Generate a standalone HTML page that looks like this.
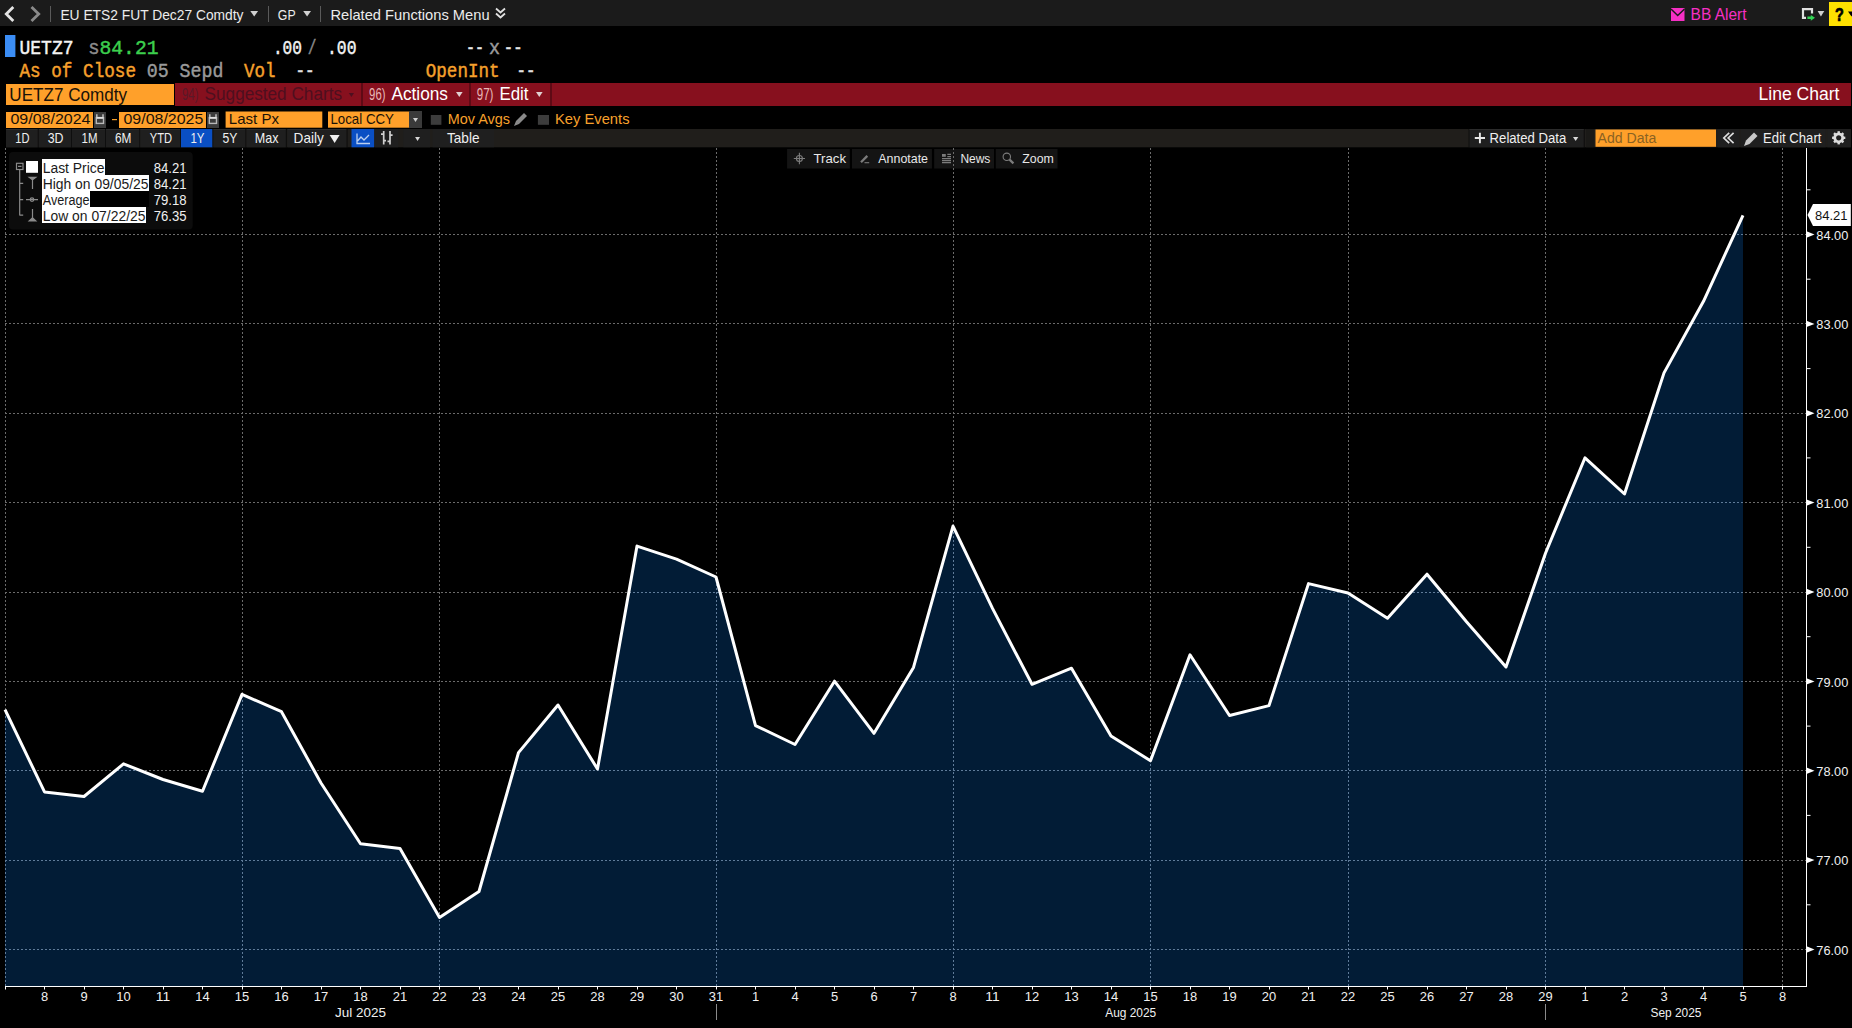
<!DOCTYPE html>
<html><head><meta charset="utf-8"><title>UETZ7 Comdty Line Chart</title>
<style>html,body{margin:0;padding:0;background:#000;width:1852px;height:1028px;overflow:hidden}svg{display:block}</style>
</head><body>
<svg width="1852" height="1028" viewBox="0 0 1852 1028">
<rect x="0" y="0" width="1852" height="1028" fill="#000"/>
<rect x="0" y="0" width="1852" height="26" fill="#1b1b1b" />
<path d="M13.3,7 L6.3,14 L13.3,21" fill="none" stroke="#e4e4e4" stroke-width="2.8"/>
<path d="M31.5,7 L38.7,14 L31.5,21" fill="none" stroke="#8a8a8a" stroke-width="2.8"/>
<rect x="50" y="6" width="1" height="16" fill="#5a5a5a" />
<text x="60.4" y="19.7" font-family='"Liberation Sans", sans-serif' font-size="15.41" fill="#ececec" textLength="183.1" lengthAdjust="spacingAndGlyphs" >EU ETS2 FUT Dec27 Comdty</text>
<path d="M250.3,10.9 L258.1,10.9 L254.20000000000002,16.6 Z" fill="#d0d0d0"/>
<rect x="268" y="6" width="1" height="16" fill="#5a5a5a" />
<text x="277.8" y="19.7" font-family='"Liberation Sans", sans-serif' font-size="15.41" fill="#ececec" textLength="17.8" lengthAdjust="spacingAndGlyphs" >GP</text>
<path d="M303.2,10.9 L311,10.9 L307.1,16.6 Z" fill="#d0d0d0"/>
<rect x="320" y="6" width="1" height="16" fill="#5a5a5a" />
<text x="330.4" y="19.7" font-family='"Liberation Sans", sans-serif' font-size="15.41" fill="#ececec" textLength="159.2" lengthAdjust="spacingAndGlyphs" >Related Functions Menu</text>
<path d="M496,8.5 L500.5,12.5 L505,8.5 M496,13.5 L500.5,17.5 L505,13.5" fill="none" stroke="#e0e0e0" stroke-width="1.8"/>
<rect x="1671" y="8" width="13.5" height="13" fill="#f62fc4" />
<path d="M1671,9 L1677.7,15.5 L1684.5,9" fill="none" stroke="#1b1b1b" stroke-width="1.5"/>
<text x="1690.6" y="19.7" font-family='"Liberation Sans", sans-serif' font-size="15.84" fill="#f62fc4" textLength="55.9" lengthAdjust="spacingAndGlyphs" >BB Alert</text>
<path d="M1806,17.8 L1803,17.8 L1803,9.2 L1812,9.2 L1812,13.6" fill="none" stroke="#e0e0e0" stroke-width="2.2"/>
<path d="M1807.4,16.6 L1810.8,16.6 L1810.8,15 L1815,17.8 L1810.8,20.7 L1810.8,19 L1807.4,19 Z" fill="#33d455"/>
<path d="M1817.6,10.9 L1824.3,10.9 L1820.9499999999998,16.6 Z" fill="#d0d0d0"/>
<rect x="1829" y="2" width="23" height="24" fill="#ffe100" />
<text x="1835" y="20.9" font-family='"Liberation Sans", sans-serif' font-size="18.46" fill="#000" textLength="8.8" lengthAdjust="spacingAndGlyphs" font-weight="bold" stroke="#000" stroke-width="0.7">?</text>
<path d="M1848,11.5 L1855,11.5 L1851.5,16.5 Z" fill="#000"/>
<rect x="5" y="35" width="10.4" height="22" fill="#3b8df5" />
<text x="19.5" y="54" font-family='"Liberation Mono", monospace' font-size="20.18" fill="#f4f4f4" textLength="54.0" lengthAdjust="spacingAndGlyphs"  stroke="#f4f4f4" stroke-width="0.45">UETZ7</text>
<text x="88.2" y="54" font-family='"Liberation Mono", monospace' font-size="20.18" fill="#8c8c8c" textLength="11.3" lengthAdjust="spacingAndGlyphs"  stroke="#8c8c8c" stroke-width="0.45">s</text>
<text x="99.5" y="54" font-family='"Liberation Mono", monospace' font-size="20.18" fill="#3ccf4e" textLength="59.0" lengthAdjust="spacingAndGlyphs"  stroke="#3ccf4e" stroke-width="0.45">84.21</text>
<text x="272.9" y="54" font-family='"Liberation Mono", monospace' font-size="20.18" fill="#f4f4f4" textLength="29.1" lengthAdjust="spacingAndGlyphs"  stroke="#f4f4f4" stroke-width="0.45">.00</text>
<text x="307.8" y="54" font-family='"Liberation Mono", monospace' font-size="20.18" fill="#8c8c8c" textLength="8.7" lengthAdjust="spacingAndGlyphs"  stroke="#8c8c8c" stroke-width="0.45">/</text>
<text x="327" y="54" font-family='"Liberation Mono", monospace' font-size="20.18" fill="#f4f4f4" textLength="29.5" lengthAdjust="spacingAndGlyphs"  stroke="#f4f4f4" stroke-width="0.45">.00</text>
<text x="466" y="54" font-family='"Liberation Mono", monospace' font-size="20.18" fill="#e8e8e8" textLength="18" lengthAdjust="spacingAndGlyphs"  stroke="#e8e8e8" stroke-width="0.45">--</text>
<text x="489" y="54" font-family='"Liberation Mono", monospace' font-size="20.18" fill="#9a9a9a" textLength="11" lengthAdjust="spacingAndGlyphs"  stroke="#9a9a9a" stroke-width="0.45">x</text>
<text x="503.8" y="54" font-family='"Liberation Mono", monospace' font-size="20.18" fill="#e8e8e8" textLength="18.7" lengthAdjust="spacingAndGlyphs"  stroke="#e8e8e8" stroke-width="0.45">--</text>
<text x="19.5" y="77.2" font-family='"Liberation Mono", monospace' font-size="20.18" fill="#f7a12c" textLength="116.5" lengthAdjust="spacingAndGlyphs"  stroke="#f7a12c" stroke-width="0.45">As of Close</text>
<text x="146.7" y="77.2" font-family='"Liberation Mono", monospace' font-size="20.18" fill="#9a9a9a" textLength="76.8" lengthAdjust="spacingAndGlyphs"  stroke="#9a9a9a" stroke-width="0.45">05 Sepd</text>
<text x="244" y="77.2" font-family='"Liberation Mono", monospace' font-size="20.18" fill="#f7a12c" textLength="31.5" lengthAdjust="spacingAndGlyphs"  stroke="#f7a12c" stroke-width="0.45">Vol</text>
<text x="295.4" y="77.2" font-family='"Liberation Mono", monospace' font-size="20.18" fill="#e0e0e0" textLength="19.1" lengthAdjust="spacingAndGlyphs"  stroke="#e0e0e0" stroke-width="0.45">--</text>
<text x="425.8" y="77.2" font-family='"Liberation Mono", monospace' font-size="20.18" fill="#f7a12c" textLength="73.7" lengthAdjust="spacingAndGlyphs"  stroke="#f7a12c" stroke-width="0.45">OpenInt</text>
<text x="516.6" y="77.2" font-family='"Liberation Mono", monospace' font-size="20.18" fill="#e0e0e0" textLength="18.9" lengthAdjust="spacingAndGlyphs"  stroke="#e0e0e0" stroke-width="0.45">--</text>
<rect x="175" y="83" width="1676" height="23" fill="#87101e" />
<rect x="6" y="84" width="168" height="21" fill="#ffa02a" />
<text x="9.3" y="100.7" font-family='"Liberation Sans", sans-serif' font-size="18.46" fill="#1a1208" textLength="117.7" lengthAdjust="spacingAndGlyphs" >UETZ7 Comdty</text>
<rect x="361" y="83" width="2" height="23" fill="#5e0a15" />
<rect x="469" y="83" width="2" height="23" fill="#5e0a15" />
<rect x="550" y="83" width="2" height="23" fill="#5e0a15" />
<text x="181.9" y="100.3" font-family='"Liberation Sans", sans-serif' font-size="15.99" fill="#5a1828" textLength="16.6" lengthAdjust="spacingAndGlyphs" >94)</text>
<text x="204.6" y="100.3" font-family='"Liberation Sans", sans-serif' font-size="18.17" fill="#4e0f1f" textLength="137.4" lengthAdjust="spacingAndGlyphs" >Suggested Charts</text>
<path d="M348.8,93 L354,93 L351.4,97 Z" fill="#4e0f1f"/>
<text x="369.1" y="100.3" font-family='"Liberation Sans", sans-serif' font-size="15.99" fill="#e8b8b8" textLength="16.4" lengthAdjust="spacingAndGlyphs" >96)</text>
<text x="391.4" y="100.3" font-family='"Liberation Sans", sans-serif' font-size="18.17" fill="#ffffff" textLength="56.6" lengthAdjust="spacingAndGlyphs" >Actions</text>
<path d="M456,92 L462.6,92 L459.3,97 Z" fill="#e0d0d0"/>
<text x="476.7" y="100.3" font-family='"Liberation Sans", sans-serif' font-size="15.99" fill="#e8b8b8" textLength="16.8" lengthAdjust="spacingAndGlyphs" >97)</text>
<text x="499.4" y="100.3" font-family='"Liberation Sans", sans-serif' font-size="18.17" fill="#ffffff" textLength="29.1" lengthAdjust="spacingAndGlyphs" >Edit</text>
<path d="M536,92 L542.6,92 L539.3,97 Z" fill="#e0d0d0"/>
<text x="1758.5" y="100.1" font-family='"Liberation Sans", sans-serif' font-size="18.9" fill="#ffffff" textLength="81.0" lengthAdjust="spacingAndGlyphs" >Line Chart</text>
<rect x="6" y="112" width="87" height="16" fill="#ffa02a" />
<rect x="94" y="112" width="12" height="16" fill="#3c3c3c" />
<g transform="translate(0,0)"><path d="M96.8,114.3 L96.8,118 M103,114.3 L103,118" stroke="#b8b8b8" stroke-width="1.6"/><rect x="96.3" y="117.6" width="7.2" height="5.8" fill="none" stroke="#b8b8b8" stroke-width="1.4"/><rect x="96.5" y="117" width="7" height="1.8" fill="#dddddd"/></g>
<text x="10.4" y="124.3" font-family='"Liberation Sans", sans-serif' font-size="14.97" fill="#1a1208" textLength="80.1" lengthAdjust="spacingAndGlyphs" >09/08/2024</text>
<rect x="112" y="119" width="5" height="1.2" fill="#f7a12c" />
<rect x="119" y="112" width="87" height="16" fill="#ffa02a" />
<text x="123.5" y="124.3" font-family='"Liberation Sans", sans-serif' font-size="14.97" fill="#1a1208" textLength="79.8" lengthAdjust="spacingAndGlyphs" >09/08/2025</text>
<rect x="207" y="112" width="12" height="16" fill="#3c3c3c" />
<g transform="translate(113,0)"><path d="M96.8,114.3 L96.8,118 M103,114.3 L103,118" stroke="#b8b8b8" stroke-width="1.6"/><rect x="96.3" y="117.6" width="7.2" height="5.8" fill="none" stroke="#b8b8b8" stroke-width="1.4"/><rect x="96.5" y="117" width="7" height="1.8" fill="#dddddd"/></g>
<rect x="225.6" y="111.5" width="96.7" height="16.2" fill="#ffa02a" />
<text x="228.8" y="124.3" font-family='"Liberation Sans", sans-serif' font-size="14.97" fill="#1a1208" textLength="50.2" lengthAdjust="spacingAndGlyphs" >Last Px</text>
<rect x="328" y="111.5" width="81" height="16.2" fill="#ffa02a" />
<text x="330.4" y="124.3" font-family='"Liberation Sans", sans-serif' font-size="14.97" fill="#1a1208" textLength="63.6" lengthAdjust="spacingAndGlyphs" >Local CCY</text>
<rect x="409" y="111" width="13" height="17" fill="#3a3a3a" />
<path d="M413,118 L418,118 L415.5,122 Z" fill="#cfcfcf"/>
<rect x="430.8" y="115" width="10.6" height="9.8" fill="#3c3c3c" />
<text x="447.8" y="124.3" font-family='"Liberation Sans", sans-serif' font-size="14.97" fill="#f7a12c" textLength="62.2" lengthAdjust="spacingAndGlyphs" >Mov Avgs</text>
<path d="M514,126 L516,121 L524,113 L527,116 L519,124 Z" fill="#8a8a8a"/>
<rect x="537.9" y="115" width="11.1" height="9.8" fill="#3c3c3c" />
<text x="555" y="124.3" font-family='"Liberation Sans", sans-serif' font-size="14.97" fill="#f7a12c" textLength="74.5" lengthAdjust="spacingAndGlyphs" >Key Events</text>
<rect x="6" y="129" width="1845" height="18.3" fill="#201e1b" />
<rect x="6" y="129" width="31.8" height="18.3" fill="#1f1f1f" />
<rect x="6" y="129" width="31.8" height="1" fill="#2c2c2c" />
<rect x="37.8" y="129" width="1.0" height="18.3" fill="#0e0e0e" />
<text x="15.3" y="142.8" font-family='"Liberation Sans", sans-serif' font-size="14.1" fill="#f0f0f0" textLength="14.2" lengthAdjust="spacingAndGlyphs" >1D</text>
<rect x="38.9" y="129" width="32.1" height="18.3" fill="#1f1f1f" />
<rect x="38.9" y="129" width="32.1" height="1" fill="#2c2c2c" />
<rect x="71" y="129" width="1" height="18.3" fill="#0e0e0e" />
<text x="47.7" y="142.8" font-family='"Liberation Sans", sans-serif' font-size="14.1" fill="#f0f0f0" textLength="15.8" lengthAdjust="spacingAndGlyphs" >3D</text>
<rect x="72" y="129" width="33" height="18.3" fill="#1f1f1f" />
<rect x="72" y="129" width="33" height="1" fill="#2c2c2c" />
<rect x="105" y="129" width="1" height="18.3" fill="#0e0e0e" />
<text x="81.6" y="142.8" font-family='"Liberation Sans", sans-serif' font-size="14.1" fill="#f0f0f0" textLength="15.9" lengthAdjust="spacingAndGlyphs" >1M</text>
<rect x="106" y="129" width="33.3" height="18.3" fill="#1f1f1f" />
<rect x="106" y="129" width="33.3" height="1" fill="#2c2c2c" />
<rect x="139.3" y="129" width="1.0" height="18.3" fill="#0e0e0e" />
<text x="115" y="142.8" font-family='"Liberation Sans", sans-serif' font-size="14.1" fill="#f0f0f0" textLength="16.5" lengthAdjust="spacingAndGlyphs" >6M</text>
<rect x="140.3" y="129" width="39.7" height="18.3" fill="#1f1f1f" />
<rect x="140.3" y="129" width="39.7" height="1" fill="#2c2c2c" />
<rect x="180" y="129" width="1" height="18.3" fill="#0e0e0e" />
<text x="149.7" y="142.8" font-family='"Liberation Sans", sans-serif' font-size="14.1" fill="#f0f0f0" textLength="22.3" lengthAdjust="spacingAndGlyphs" >YTD</text>
<rect x="181" y="129" width="31.5" height="18.3" fill="#0a4fc4" />
<rect x="212.5" y="129" width="1.0" height="18.3" fill="#0e0e0e" />
<text x="190.5" y="142.8" font-family='"Liberation Sans", sans-serif' font-size="14.1" fill="#f0f0f0" textLength="14.0" lengthAdjust="spacingAndGlyphs" >1Y</text>
<rect x="213.5" y="129" width="31.9" height="18.3" fill="#1f1f1f" />
<rect x="213.5" y="129" width="31.9" height="1" fill="#2c2c2c" />
<rect x="245.4" y="129" width="1.0" height="18.3" fill="#0e0e0e" />
<text x="222.4" y="142.8" font-family='"Liberation Sans", sans-serif' font-size="14.1" fill="#f0f0f0" textLength="14.9" lengthAdjust="spacingAndGlyphs" >5Y</text>
<rect x="246.6" y="129" width="39.3" height="18.3" fill="#1f1f1f" />
<rect x="246.6" y="129" width="39.3" height="1" fill="#2c2c2c" />
<rect x="285.9" y="129" width="1.0" height="18.3" fill="#0e0e0e" />
<text x="254.8" y="142.8" font-family='"Liberation Sans", sans-serif' font-size="14.1" fill="#f0f0f0" textLength="23.7" lengthAdjust="spacingAndGlyphs" >Max</text>
<rect x="287.5" y="129" width="59.1" height="18.3" fill="#1f1f1f" />
<rect x="287.5" y="129" width="59.1" height="1" fill="#2c2c2c" />
<rect x="346.6" y="129" width="1.0" height="18.3" fill="#0e0e0e" />
<text x="293.6" y="142.8" font-family='"Liberation Sans", sans-serif' font-size="14.1" fill="#f0f0f0" textLength="30.2" lengthAdjust="spacingAndGlyphs" >Daily</text>
<path d="M329.6,135 L339.6,135 L334.6,143 Z" fill="#f0f0f0"/>
<rect x="351.5" y="129" width="22.6" height="18.3" fill="#0a4fc4" />
<path d="M357,133.5 L357,143.5 L370,143.5 M357.5,141 L361,137 L364,140 L369,135" fill="none" stroke="#bcd0f0" stroke-width="1.3"/>
<rect x="375" y="129" width="23.4" height="18.3" fill="#1f1f1f" />
<path d="M383.7,131 L383.7,144.6 M381,134.1 L383.7,134.1 M383.7,140.6 L386,140.6 M390,131 L390,144.6 M387.5,141.4 L390,141.4 M390,135.2 L392.6,135.2" fill="none" stroke="#d0d0d0" stroke-width="1.7"/>
<rect x="403.3" y="129" width="26.7" height="18.3" fill="#1f1f1f" />
<path d="M415.1,137 L420,137 L417.55,141 Z" fill="#d8d8d8"/>
<rect x="432.5" y="129" width="61.5" height="18.3" fill="#1f1f1f" />
<text x="447" y="142.8" font-family='"Liberation Sans", sans-serif' font-size="14.1" fill="#f0f0f0" textLength="32.5" lengthAdjust="spacingAndGlyphs" >Table</text>
<rect x="1469.5" y="129" width="114.3" height="18.3" fill="#1f1f1f" />
<path d="M1479.9,132.7 L1479.9,143.3 M1474.8,138 L1485,138" stroke="#e8e8e8" stroke-width="1.9"/>
<rect x="1468.5" y="129" width="1.0" height="18.3" fill="#0e0e0e" />
<rect x="1583.8" y="129" width="1.0" height="18.3" fill="#0e0e0e" />
<rect x="1469.5" y="129" width="114.3" height="1" fill="#2c2c2c" />
<text x="1489.6" y="143.1" font-family='"Liberation Sans", sans-serif' font-size="14.83" fill="#f0f0f0" textLength="76.7" lengthAdjust="spacingAndGlyphs" >Related Data</text>
<path d="M1573,137 L1578.3,137 L1575.65,141 Z" fill="#d8d8d8"/>
<rect x="1586" y="129" width="7.8" height="18.3" fill="#1a1917" />
<rect x="1595.5" y="129.5" width="120.5" height="17.3" fill="#ffa02a" />
<text x="1597.6" y="143.1" font-family='"Liberation Sans", sans-serif' font-size="14.83" fill="#8a6222" textLength="58.7" lengthAdjust="spacingAndGlyphs" >Add Data</text>
<rect x="1717.8" y="129" width="21.2" height="18.3" fill="#1f1f1f" />
<path d="M1729.2,132.8 L1723.8,138 L1729.2,143.2 M1733.6,132.8 L1728.2,138 L1733.6,143.2" fill="none" stroke="#dcdcdc" stroke-width="1.7"/>
<rect x="1740.5" y="129" width="85.3" height="18.3" fill="#1f1f1f" />
<path d="M1744,146 L1746,140.5 L1754,132.5 L1757.5,136 L1749.5,144 Z" fill="#c8c8c8"/>
<text x="1763.1" y="143.1" font-family='"Liberation Sans", sans-serif' font-size="14.83" fill="#f0f0f0" textLength="58.3" lengthAdjust="spacingAndGlyphs" >Edit Chart</text>
<rect x="1827.3" y="129" width="23.3" height="18.3" fill="#1f1f1f" />
<g transform="translate(1838.7,137.8)"><circle r="4" fill="none" stroke="#dcdcdc" stroke-width="2.8"/><rect x="-1.2" y="-6.6" width="2.4" height="3" fill="#dcdcdc" transform="rotate(0)"/><rect x="-1.2" y="-6.6" width="2.4" height="3" fill="#dcdcdc" transform="rotate(45)"/><rect x="-1.2" y="-6.6" width="2.4" height="3" fill="#dcdcdc" transform="rotate(90)"/><rect x="-1.2" y="-6.6" width="2.4" height="3" fill="#dcdcdc" transform="rotate(135)"/><rect x="-1.2" y="-6.6" width="2.4" height="3" fill="#dcdcdc" transform="rotate(180)"/><rect x="-1.2" y="-6.6" width="2.4" height="3" fill="#dcdcdc" transform="rotate(225)"/><rect x="-1.2" y="-6.6" width="2.4" height="3" fill="#dcdcdc" transform="rotate(270)"/><rect x="-1.2" y="-6.6" width="2.4" height="3" fill="#dcdcdc" transform="rotate(315)"/></g>
<path d="M5.0,986.0 L5.0,709.6 L44.5,791.9 L84.0,796.5 L123.5,763.8 L163.0,779.5 L202.5,791.2 L242.0,694.4 L281.5,711.7 L321.0,783.0 L360.5,843.7 L400.0,848.4 L439.5,917.5 L479.0,891.5 L518.5,752.6 L558.0,705.0 L597.5,769.0 L637.0,546.1 L676.5,559.2 L716.0,577.0 L755.5,725.6 L795.0,744.5 L834.5,681.2 L874.0,733.3 L913.5,667.4 L953.0,526.1 L992.5,608.4 L1032.0,684.3 L1071.5,668.2 L1111.0,736.0 L1150.5,760.8 L1190.0,654.8 L1229.5,715.5 L1269.0,705.6 L1308.5,583.6 L1348.0,593.0 L1387.5,618.3 L1427.0,574.2 L1466.5,621.8 L1506.0,667.0 L1545.5,553.2 L1585.0,457.8 L1624.5,494.0 L1664.0,372.9 L1703.5,301.3 L1743.0,215.3 L1743.0,986.0 Z" fill="#021c36"/>
<rect x="787.1" y="149" width="62.7" height="19.5" fill="#141414" />
<rect x="852" y="149" width="79.9" height="19.5" fill="#141414" />
<rect x="934.2" y="149" width="59.8" height="19.5" fill="#141414" />
<rect x="995.8" y="149" width="61.7" height="19.5" fill="#141414" />
<text x="813.5" y="163" font-family='"Liberation Sans", sans-serif' font-size="13.37" fill="#e8e8e8" textLength="32.5" lengthAdjust="spacingAndGlyphs" >Track</text>
<text x="878.3" y="163" font-family='"Liberation Sans", sans-serif' font-size="13.37" fill="#e8e8e8" textLength="49.7" lengthAdjust="spacingAndGlyphs" >Annotate</text>
<text x="960.4" y="163" font-family='"Liberation Sans", sans-serif' font-size="13.37" fill="#e8e8e8" textLength="29.9" lengthAdjust="spacingAndGlyphs" >News</text>
<text x="1022.3" y="163" font-family='"Liberation Sans", sans-serif' font-size="13.37" fill="#e8e8e8" textLength="31.5" lengthAdjust="spacingAndGlyphs" >Zoom</text>
<g stroke="#7c7c7c" stroke-width="1.1" fill="none"><circle cx="799.4" cy="158.5" r="3"/><path d="M793.8,158.5 L805,158.5 M799.4,152.8 L799.4,164.2"/><path d="M861,162.2 L867.3,155.9" stroke-width="2.3"/><path d="M864.5,162.7 L869.2,162.7"/><rect x="942" y="154" width="3.8" height="2.8" fill="#7c7c7c" stroke="none"/><path d="M947.3,154.4 L951,154.4 M947.3,156.6 L951,156.6 M942,158.6 L951,158.6 M942,160.6 L951,160.6 M942,162.6 L951,162.6"/><circle cx="1006.8" cy="156.8" r="3.7"/><path d="M1009.6,159.6 L1013.4,163.4" stroke-width="2.2"/></g>
<defs><clipPath id="fc"><path d="M5.0,986.0 L5.0,709.6 L44.5,791.9 L84.0,796.5 L123.5,763.8 L163.0,779.5 L202.5,791.2 L242.0,694.4 L281.5,711.7 L321.0,783.0 L360.5,843.7 L400.0,848.4 L439.5,917.5 L479.0,891.5 L518.5,752.6 L558.0,705.0 L597.5,769.0 L637.0,546.1 L676.5,559.2 L716.0,577.0 L755.5,725.6 L795.0,744.5 L834.5,681.2 L874.0,733.3 L913.5,667.4 L953.0,526.1 L992.5,608.4 L1032.0,684.3 L1071.5,668.2 L1111.0,736.0 L1150.5,760.8 L1190.0,654.8 L1229.5,715.5 L1269.0,705.6 L1308.5,583.6 L1348.0,593.0 L1387.5,618.3 L1427.0,574.2 L1466.5,621.8 L1506.0,667.0 L1545.5,553.2 L1585.0,457.8 L1624.5,494.0 L1664.0,372.9 L1703.5,301.3 L1743.0,215.3 L1743.0,986.0 Z"/></clipPath></defs>
<path d="M5,949.5 L1806.5,949.5 M5,860.5 L1806.5,860.5 M5,770.5 L1806.5,770.5 M5,681.5 L1806.5,681.5 M5,592.5 L1806.5,592.5 M5,502.5 L1806.5,502.5 M5,413.5 L1806.5,413.5 M5,323.5 L1806.5,323.5 M5,234.5 L1806.5,234.5 M5.5,148 L5.5,986 M242.5,148 L242.5,986 M439.5,148 L439.5,986 M716.5,148 L716.5,986 M953.5,148 L953.5,986 M1150.5,148 L1150.5,986 M1348.5,148 L1348.5,986 M1545.5,148 L1545.5,986 M1782.5,148 L1782.5,986" stroke="#6b6b6b" stroke-width="1" stroke-dasharray="2,2" fill="none" shape-rendering="crispEdges"/>
<path d="M5,949.5 L1806.5,949.5 M5,860.5 L1806.5,860.5 M5,770.5 L1806.5,770.5 M5,681.5 L1806.5,681.5 M5,592.5 L1806.5,592.5 M5,502.5 L1806.5,502.5 M5,413.5 L1806.5,413.5 M5,323.5 L1806.5,323.5 M5,234.5 L1806.5,234.5 M5.5,148 L5.5,986 M242.5,148 L242.5,986 M439.5,148 L439.5,986 M716.5,148 L716.5,986 M953.5,148 L953.5,986 M1150.5,148 L1150.5,986 M1348.5,148 L1348.5,986 M1545.5,148 L1545.5,986 M1782.5,148 L1782.5,986" stroke="#5f7b99" stroke-width="1" stroke-dasharray="2,2" fill="none" shape-rendering="crispEdges" clip-path="url(#fc)"/>
<path d="M5.0,709.6 L44.5,791.9 L84.0,796.5 L123.5,763.8 L163.0,779.5 L202.5,791.2 L242.0,694.4 L281.5,711.7 L321.0,783.0 L360.5,843.7 L400.0,848.4 L439.5,917.5 L479.0,891.5 L518.5,752.6 L558.0,705.0 L597.5,769.0 L637.0,546.1 L676.5,559.2 L716.0,577.0 L755.5,725.6 L795.0,744.5 L834.5,681.2 L874.0,733.3 L913.5,667.4 L953.0,526.1 L992.5,608.4 L1032.0,684.3 L1071.5,668.2 L1111.0,736.0 L1150.5,760.8 L1190.0,654.8 L1229.5,715.5 L1269.0,705.6 L1308.5,583.6 L1348.0,593.0 L1387.5,618.3 L1427.0,574.2 L1466.5,621.8 L1506.0,667.0 L1545.5,553.2 L1585.0,457.8 L1624.5,494.0 L1664.0,372.9 L1703.5,301.3 L1743.0,215.3" fill="none" stroke="#ffffff" stroke-width="3" stroke-linejoin="round" stroke-linecap="butt"/>
<path d="M5,986.5 L1806.5,986.5 M1806.5,148 L1806.5,987" stroke="#ffffff" stroke-width="1.2" fill="none" shape-rendering="crispEdges"/>
<path d="M5.5,986 L5.5,989.5 M44.5,986 L44.5,989.5 M84.5,986 L84.5,989.5 M123.5,986 L123.5,989.5 M163.5,986 L163.5,989.5 M202.5,986 L202.5,989.5 M242.5,986 L242.5,989.5 M281.5,986 L281.5,989.5 M321.5,986 L321.5,989.5 M360.5,986 L360.5,989.5 M400.5,986 L400.5,989.5 M439.5,986 L439.5,989.5 M479.5,986 L479.5,989.5 M518.5,986 L518.5,989.5 M558.5,986 L558.5,989.5 M597.5,986 L597.5,989.5 M637.5,986 L637.5,989.5 M676.5,986 L676.5,989.5 M716.5,986 L716.5,989.5 M755.5,986 L755.5,989.5 M795.5,986 L795.5,989.5 M834.5,986 L834.5,989.5 M874.5,986 L874.5,989.5 M913.5,986 L913.5,989.5 M953.5,986 L953.5,989.5 M992.5,986 L992.5,989.5 M1032.5,986 L1032.5,989.5 M1071.5,986 L1071.5,989.5 M1111.5,986 L1111.5,989.5 M1150.5,986 L1150.5,989.5 M1190.5,986 L1190.5,989.5 M1229.5,986 L1229.5,989.5 M1269.5,986 L1269.5,989.5 M1308.5,986 L1308.5,989.5 M1348.5,986 L1348.5,989.5 M1387.5,986 L1387.5,989.5 M1427.5,986 L1427.5,989.5 M1466.5,986 L1466.5,989.5 M1506.5,986 L1506.5,989.5 M1545.5,986 L1545.5,989.5 M1585.5,986 L1585.5,989.5 M1624.5,986 L1624.5,989.5 M1664.5,986 L1664.5,989.5 M1703.5,986 L1703.5,989.5 M1743.5,986 L1743.5,989.5 M1782.5,986 L1782.5,989.5 M1806.5,904.8 L1810.5,904.8 M1806.5,815.4 L1810.5,815.4 M1806.5,726.1 L1810.5,726.1 M1806.5,636.7 L1810.5,636.7 M1806.5,547.3 L1810.5,547.3 M1806.5,457.9 L1810.5,457.9 M1806.5,368.6 L1810.5,368.6 M1806.5,279.2 L1810.5,279.2 M1806.5,189.8 L1810.5,189.8" stroke="#ffffff" stroke-width="1" fill="none"/>
<text x="40.9" y="1000.9" font-family='"Liberation Sans", sans-serif' font-size="13.37" fill="#f0f0f0" textLength="7.2" lengthAdjust="spacingAndGlyphs" >8</text>
<text x="80.4" y="1000.9" font-family='"Liberation Sans", sans-serif' font-size="13.37" fill="#f0f0f0" textLength="7.2" lengthAdjust="spacingAndGlyphs" >9</text>
<text x="116.3" y="1000.9" font-family='"Liberation Sans", sans-serif' font-size="13.37" fill="#f0f0f0" textLength="14.4" lengthAdjust="spacingAndGlyphs" >10</text>
<text x="155.8" y="1000.9" font-family='"Liberation Sans", sans-serif' font-size="13.37" fill="#f0f0f0" textLength="14.4" lengthAdjust="spacingAndGlyphs" >11</text>
<text x="195.3" y="1000.9" font-family='"Liberation Sans", sans-serif' font-size="13.37" fill="#f0f0f0" textLength="14.4" lengthAdjust="spacingAndGlyphs" >14</text>
<text x="234.8" y="1000.9" font-family='"Liberation Sans", sans-serif' font-size="13.37" fill="#f0f0f0" textLength="14.4" lengthAdjust="spacingAndGlyphs" >15</text>
<text x="274.3" y="1000.9" font-family='"Liberation Sans", sans-serif' font-size="13.37" fill="#f0f0f0" textLength="14.4" lengthAdjust="spacingAndGlyphs" >16</text>
<text x="313.8" y="1000.9" font-family='"Liberation Sans", sans-serif' font-size="13.37" fill="#f0f0f0" textLength="14.4" lengthAdjust="spacingAndGlyphs" >17</text>
<text x="353.3" y="1000.9" font-family='"Liberation Sans", sans-serif' font-size="13.37" fill="#f0f0f0" textLength="14.4" lengthAdjust="spacingAndGlyphs" >18</text>
<text x="392.8" y="1000.9" font-family='"Liberation Sans", sans-serif' font-size="13.37" fill="#f0f0f0" textLength="14.4" lengthAdjust="spacingAndGlyphs" >21</text>
<text x="432.3" y="1000.9" font-family='"Liberation Sans", sans-serif' font-size="13.37" fill="#f0f0f0" textLength="14.4" lengthAdjust="spacingAndGlyphs" >22</text>
<text x="471.8" y="1000.9" font-family='"Liberation Sans", sans-serif' font-size="13.37" fill="#f0f0f0" textLength="14.4" lengthAdjust="spacingAndGlyphs" >23</text>
<text x="511.3" y="1000.9" font-family='"Liberation Sans", sans-serif' font-size="13.37" fill="#f0f0f0" textLength="14.4" lengthAdjust="spacingAndGlyphs" >24</text>
<text x="550.8" y="1000.9" font-family='"Liberation Sans", sans-serif' font-size="13.37" fill="#f0f0f0" textLength="14.4" lengthAdjust="spacingAndGlyphs" >25</text>
<text x="590.3" y="1000.9" font-family='"Liberation Sans", sans-serif' font-size="13.37" fill="#f0f0f0" textLength="14.4" lengthAdjust="spacingAndGlyphs" >28</text>
<text x="629.8" y="1000.9" font-family='"Liberation Sans", sans-serif' font-size="13.37" fill="#f0f0f0" textLength="14.4" lengthAdjust="spacingAndGlyphs" >29</text>
<text x="669.3" y="1000.9" font-family='"Liberation Sans", sans-serif' font-size="13.37" fill="#f0f0f0" textLength="14.4" lengthAdjust="spacingAndGlyphs" >30</text>
<text x="708.8" y="1000.9" font-family='"Liberation Sans", sans-serif' font-size="13.37" fill="#f0f0f0" textLength="14.4" lengthAdjust="spacingAndGlyphs" >31</text>
<text x="751.9" y="1000.9" font-family='"Liberation Sans", sans-serif' font-size="13.37" fill="#f0f0f0" textLength="7.2" lengthAdjust="spacingAndGlyphs" >1</text>
<text x="791.4" y="1000.9" font-family='"Liberation Sans", sans-serif' font-size="13.37" fill="#f0f0f0" textLength="7.2" lengthAdjust="spacingAndGlyphs" >4</text>
<text x="830.9" y="1000.9" font-family='"Liberation Sans", sans-serif' font-size="13.37" fill="#f0f0f0" textLength="7.2" lengthAdjust="spacingAndGlyphs" >5</text>
<text x="870.4" y="1000.9" font-family='"Liberation Sans", sans-serif' font-size="13.37" fill="#f0f0f0" textLength="7.2" lengthAdjust="spacingAndGlyphs" >6</text>
<text x="909.9" y="1000.9" font-family='"Liberation Sans", sans-serif' font-size="13.37" fill="#f0f0f0" textLength="7.2" lengthAdjust="spacingAndGlyphs" >7</text>
<text x="949.4" y="1000.9" font-family='"Liberation Sans", sans-serif' font-size="13.37" fill="#f0f0f0" textLength="7.2" lengthAdjust="spacingAndGlyphs" >8</text>
<text x="985.3" y="1000.9" font-family='"Liberation Sans", sans-serif' font-size="13.37" fill="#f0f0f0" textLength="14.4" lengthAdjust="spacingAndGlyphs" >11</text>
<text x="1024.8" y="1000.9" font-family='"Liberation Sans", sans-serif' font-size="13.37" fill="#f0f0f0" textLength="14.4" lengthAdjust="spacingAndGlyphs" >12</text>
<text x="1064.3" y="1000.9" font-family='"Liberation Sans", sans-serif' font-size="13.37" fill="#f0f0f0" textLength="14.4" lengthAdjust="spacingAndGlyphs" >13</text>
<text x="1103.8" y="1000.9" font-family='"Liberation Sans", sans-serif' font-size="13.37" fill="#f0f0f0" textLength="14.4" lengthAdjust="spacingAndGlyphs" >14</text>
<text x="1143.3" y="1000.9" font-family='"Liberation Sans", sans-serif' font-size="13.37" fill="#f0f0f0" textLength="14.4" lengthAdjust="spacingAndGlyphs" >15</text>
<text x="1182.8" y="1000.9" font-family='"Liberation Sans", sans-serif' font-size="13.37" fill="#f0f0f0" textLength="14.4" lengthAdjust="spacingAndGlyphs" >18</text>
<text x="1222.3" y="1000.9" font-family='"Liberation Sans", sans-serif' font-size="13.37" fill="#f0f0f0" textLength="14.4" lengthAdjust="spacingAndGlyphs" >19</text>
<text x="1261.8" y="1000.9" font-family='"Liberation Sans", sans-serif' font-size="13.37" fill="#f0f0f0" textLength="14.4" lengthAdjust="spacingAndGlyphs" >20</text>
<text x="1301.3" y="1000.9" font-family='"Liberation Sans", sans-serif' font-size="13.37" fill="#f0f0f0" textLength="14.4" lengthAdjust="spacingAndGlyphs" >21</text>
<text x="1340.8" y="1000.9" font-family='"Liberation Sans", sans-serif' font-size="13.37" fill="#f0f0f0" textLength="14.4" lengthAdjust="spacingAndGlyphs" >22</text>
<text x="1380.3" y="1000.9" font-family='"Liberation Sans", sans-serif' font-size="13.37" fill="#f0f0f0" textLength="14.4" lengthAdjust="spacingAndGlyphs" >25</text>
<text x="1419.8" y="1000.9" font-family='"Liberation Sans", sans-serif' font-size="13.37" fill="#f0f0f0" textLength="14.4" lengthAdjust="spacingAndGlyphs" >26</text>
<text x="1459.3" y="1000.9" font-family='"Liberation Sans", sans-serif' font-size="13.37" fill="#f0f0f0" textLength="14.4" lengthAdjust="spacingAndGlyphs" >27</text>
<text x="1498.8" y="1000.9" font-family='"Liberation Sans", sans-serif' font-size="13.37" fill="#f0f0f0" textLength="14.4" lengthAdjust="spacingAndGlyphs" >28</text>
<text x="1538.3" y="1000.9" font-family='"Liberation Sans", sans-serif' font-size="13.37" fill="#f0f0f0" textLength="14.4" lengthAdjust="spacingAndGlyphs" >29</text>
<text x="1581.4" y="1000.9" font-family='"Liberation Sans", sans-serif' font-size="13.37" fill="#f0f0f0" textLength="7.2" lengthAdjust="spacingAndGlyphs" >1</text>
<text x="1620.9" y="1000.9" font-family='"Liberation Sans", sans-serif' font-size="13.37" fill="#f0f0f0" textLength="7.2" lengthAdjust="spacingAndGlyphs" >2</text>
<text x="1660.4" y="1000.9" font-family='"Liberation Sans", sans-serif' font-size="13.37" fill="#f0f0f0" textLength="7.2" lengthAdjust="spacingAndGlyphs" >3</text>
<text x="1699.9" y="1000.9" font-family='"Liberation Sans", sans-serif' font-size="13.37" fill="#f0f0f0" textLength="7.2" lengthAdjust="spacingAndGlyphs" >4</text>
<text x="1739.4" y="1000.9" font-family='"Liberation Sans", sans-serif' font-size="13.37" fill="#f0f0f0" textLength="7.2" lengthAdjust="spacingAndGlyphs" >5</text>
<text x="1778.9" y="1000.9" font-family='"Liberation Sans", sans-serif' font-size="13.37" fill="#f0f0f0" textLength="7.2" lengthAdjust="spacingAndGlyphs" >8</text>
<text x="335.0" y="1017" font-family='"Liberation Sans", sans-serif' font-size="13.66" fill="#f0f0f0" textLength="51.0" lengthAdjust="spacingAndGlyphs" >Jul 2025</text>
<text x="1105.2" y="1017" font-family='"Liberation Sans", sans-serif' font-size="13.66" fill="#f0f0f0" textLength="51.0" lengthAdjust="spacingAndGlyphs" >Aug 2025</text>
<text x="1650.5" y="1017" font-family='"Liberation Sans", sans-serif' font-size="13.66" fill="#f0f0f0" textLength="51.0" lengthAdjust="spacingAndGlyphs" >Sep 2025</text>
<path d="M716.5,1004 L716.5,1020 M1545.5,1004 L1545.5,1020" stroke="#8a8a8a" stroke-width="1"/>
<path d="M1806.5,946.3 L1814.5,949.5 L1806.5,952.7 Z" fill="#ffffff"/>
<text x="1816.3" y="954.7" font-family='"Liberation Sans", sans-serif' font-size="13.08" fill="#f0f0f0" textLength="32.0" lengthAdjust="spacingAndGlyphs" >76.00</text>
<path d="M1806.5,856.9 L1814.5,860.1 L1806.5,863.3 Z" fill="#ffffff"/>
<text x="1816.3" y="865.3" font-family='"Liberation Sans", sans-serif' font-size="13.08" fill="#f0f0f0" textLength="32.0" lengthAdjust="spacingAndGlyphs" >77.00</text>
<path d="M1806.5,767.5 L1814.5,770.8 L1806.5,774.0 Z" fill="#ffffff"/>
<text x="1816.3" y="776.0" font-family='"Liberation Sans", sans-serif' font-size="13.08" fill="#f0f0f0" textLength="32.0" lengthAdjust="spacingAndGlyphs" >78.00</text>
<path d="M1806.5,678.2 L1814.5,681.4 L1806.5,684.6 Z" fill="#ffffff"/>
<text x="1816.3" y="686.6" font-family='"Liberation Sans", sans-serif' font-size="13.08" fill="#f0f0f0" textLength="32.0" lengthAdjust="spacingAndGlyphs" >79.00</text>
<path d="M1806.5,588.8 L1814.5,592.0 L1806.5,595.2 Z" fill="#ffffff"/>
<text x="1816.3" y="597.2" font-family='"Liberation Sans", sans-serif' font-size="13.08" fill="#f0f0f0" textLength="32.0" lengthAdjust="spacingAndGlyphs" >80.00</text>
<path d="M1806.5,499.4 L1814.5,502.6 L1806.5,505.8 Z" fill="#ffffff"/>
<text x="1816.3" y="507.8" font-family='"Liberation Sans", sans-serif' font-size="13.08" fill="#f0f0f0" textLength="32.0" lengthAdjust="spacingAndGlyphs" >81.00</text>
<path d="M1806.5,410.1 L1814.5,413.2 L1806.5,416.4 Z" fill="#ffffff"/>
<text x="1816.3" y="418.4" font-family='"Liberation Sans", sans-serif' font-size="13.08" fill="#f0f0f0" textLength="32.0" lengthAdjust="spacingAndGlyphs" >82.00</text>
<path d="M1806.5,320.7 L1814.5,323.9 L1806.5,327.1 Z" fill="#ffffff"/>
<text x="1816.3" y="329.1" font-family='"Liberation Sans", sans-serif' font-size="13.08" fill="#f0f0f0" textLength="32.0" lengthAdjust="spacingAndGlyphs" >83.00</text>
<path d="M1806.5,231.3 L1814.5,234.5 L1806.5,237.7 Z" fill="#ffffff"/>
<text x="1816.3" y="239.7" font-family='"Liberation Sans", sans-serif' font-size="13.08" fill="#f0f0f0" textLength="32.0" lengthAdjust="spacingAndGlyphs" >84.00</text>
<path d="M1807.5,215 L1813,204 L1850.8,204 L1850.8,226 L1813,226 Z" fill="#ffffff"/>
<text x="1815" y="219.8" font-family='"Liberation Sans", sans-serif' font-size="13.08" fill="#111111" textLength="32.5" lengthAdjust="spacingAndGlyphs" >84.21</text>
<rect x="9" y="152" width="183.7" height="77.5" rx="4" fill="#0c0c0c"/>
<rect x="42" y="159" width="63" height="16" fill="#ffffff" />
<rect x="42" y="175" width="107" height="16" fill="#ffffff" />
<rect x="42" y="191" width="48" height="16" fill="#ffffff" />
<rect x="90" y="191" width="59" height="16" fill="#000000" />
<rect x="42" y="207" width="104" height="16" fill="#ffffff" />
<rect x="26" y="161" width="12" height="11.8" fill="#ffffff" />
<g stroke="#8a8a8a" stroke-width="1.2" fill="none"><rect x="16.5" y="163.3" width="6.5" height="6.2"/><path d="M18,166.4 L21.5,166.4 M19.7,169.5 L19.7,215.5 M19.7,183.3 L23.2,183.3 M19.7,199.6 L23.2,199.6 M19.7,215.2 L23.2,215.2"/><path d="M29,177.5 L36,177.5 M32.5,177.5 L32.5,189 M26,199.6 L38,199.6 M32.5,209 L32.5,220.5 M29,220.5 L36,220.5"/><circle cx="32" cy="199.6" r="1.8"/><path d="M29.2,177.3 L35.8,177.3 L32.5,179.8 Z M29.2,220.8 L35.8,220.8 L32.5,217.8 Z" fill="#8a8a8a"/></g>
<text x="42.7" y="172.6" font-family='"Liberation Sans", sans-serif' font-size="14.24" fill="#1a1a1a" textLength="61.8" lengthAdjust="spacingAndGlyphs" >Last Price</text>
<text x="42.7" y="188.6" font-family='"Liberation Sans", sans-serif' font-size="14.24" fill="#1a1a1a" textLength="105.8" lengthAdjust="spacingAndGlyphs" >High on 09/05/25</text>
<text x="42.7" y="204.6" font-family='"Liberation Sans", sans-serif' font-size="14.24" fill="#1a1a1a" textLength="46.8" lengthAdjust="spacingAndGlyphs" >Average</text>
<text x="42.7" y="220.6" font-family='"Liberation Sans", sans-serif' font-size="14.24" fill="#1a1a1a" textLength="102.8" lengthAdjust="spacingAndGlyphs" >Low on 07/22/25</text>
<text x="153.7" y="172.6" font-family='"Liberation Sans", sans-serif' font-size="14.24" fill="#f0f0f0" textLength="32.8" lengthAdjust="spacingAndGlyphs" >84.21</text>
<text x="153.7" y="188.6" font-family='"Liberation Sans", sans-serif' font-size="14.24" fill="#f0f0f0" textLength="32.8" lengthAdjust="spacingAndGlyphs" >84.21</text>
<text x="153.7" y="204.6" font-family='"Liberation Sans", sans-serif' font-size="14.24" fill="#f0f0f0" textLength="32.8" lengthAdjust="spacingAndGlyphs" >79.18</text>
<text x="153.7" y="220.6" font-family='"Liberation Sans", sans-serif' font-size="14.24" fill="#f0f0f0" textLength="32.8" lengthAdjust="spacingAndGlyphs" >76.35</text>
</svg>
</body></html>
